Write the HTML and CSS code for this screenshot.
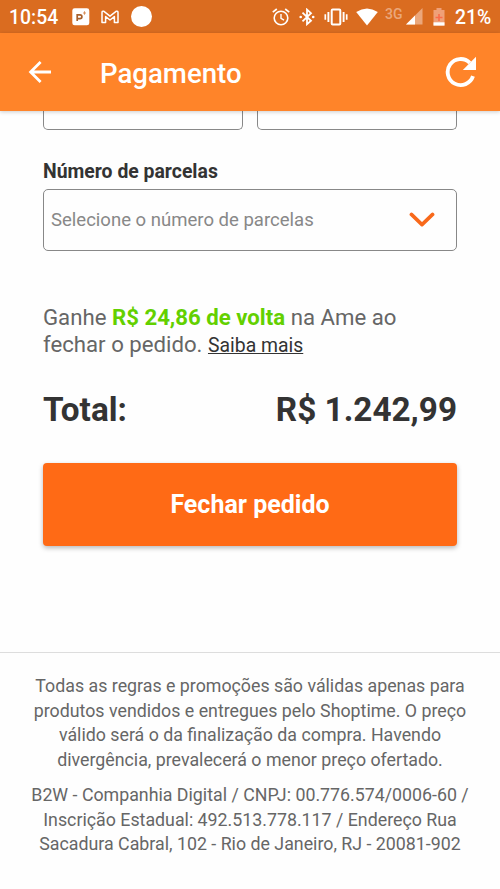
FILE: index.html
```
<!DOCTYPE html>
<html lang="pt-BR">
<head>
<meta charset="utf-8">
<title>Pagamento</title>
<link rel="stylesheet" href="styles.css">
</head>
<body>
<div class="status">
  <span class="clock">10:54</span>
  <svg class="i-app" width="18" height="18" viewBox="0 0 18 18"><rect x=".3" y=".3" width="17" height="17" rx="2.4" fill="#fff"/><path d="M5.2 13V6.8H8a1.9 1.9 0 0 1 0 3.8H5.4" fill="none" stroke="#a8602c" stroke-width="1.7"/><path d="M12.5 3.3v3.4M11 5h3" stroke="#d9905c" stroke-width="1"/></svg>
  <svg class="i-mail" width="18" height="14" viewBox="0 0 18 14"><path d="M1 12.6V2.6Q1 .8 2.6 1.2L9 6.2 15.4 1.2Q17 .8 17 2.6V12.6H13.4V6.6L9 10 4.6 6.6V12.6Z" fill="none" stroke="#fff" stroke-width="1.5" stroke-linejoin="round"/></svg>
  <span class="dot"></span>
  <div class="tray">
    <svg class="i-alarm" width="18" height="18" viewBox="0 0 18 18" fill="none" stroke="#fff"><circle cx="9" cy="10" r="6.8" stroke-width="1.6"/><path d="M9 6v4.3l3 1.8" stroke-width="1.4"/><path d="M.8 4.2 4.8 1M17.2 4.2 13.2 1" stroke-width="1.7"/></svg>
    <svg class="i-bt" width="16" height="18" viewBox="0 0 16 18"><path d="M3.5 4.6 12 12.8 8 16.2V1.6L12 5.2 3.5 13.4" fill="none" stroke="#fff" stroke-width="1.8"/><circle cx="1.7" cy="9" r="1.3" fill="#fff"/><circle cx="14.2" cy="9" r="1.3" fill="#fff"/></svg>
    <svg class="i-vib" width="24" height="18" viewBox="0 0 24 18" fill="none" stroke="#fff"><rect x="7.7" y="1.6" width="8.6" height="14.8" rx="1" stroke-width="2"/><path d="M4.4 4v10M19.6 4v10" stroke-width="1.9"/><path d="M1.3 6.2v5.6M22.7 6.2v5.6" stroke-width="1.7"/></svg>
    <svg class="i-wifi" width="22" height="18" viewBox="0 0 22 18"><path d="M.2 4Q11-3.2 21.8 4L11 17.5Z" fill="#fff"/></svg>
    <span class="net">3G</span>
    <svg class="i-sig" width="17" height="17" viewBox="0 0 17 17"><path d="M0 16.5 16.5 0V16.5Z" fill="#eba77b"/><path d="M0 16.5 9 7.5V16.5Z" fill="#fff"/></svg>
    <svg class="i-bat" width="12" height="18" viewBox="0 0 12 18"><path d="M3.5 0H8.5V2H11.5V17.6H.5V2H3.5Z" fill="#efa078"/><path d="M6 6v7M2.5 9.5h7" stroke="#fa6b4a" stroke-width="1.6"/><path d="M.5 14.3h11v3.3H.5z" fill="#fff"/></svg>
    <span class="pct">21%</span>
  </div>
</div>
<header class="bar">
  <svg class="back" width="24" height="24" viewBox="0 0 24 24"><path d="M23 12H2.6M12.6 2 2.6 12 12.6 22" fill="none" stroke="#fff" stroke-width="2.8"/></svg>
  <h1>Pagamento</h1>
  <svg class="reload" width="32" height="32" viewBox="0 0 32 32"><path d="M28 20.2A13 13 0 1 1 24.8 6.8" fill="none" stroke="#fff" stroke-width="3.9"/><path d="M31 .8V14H17.8Z" fill="#fff"/></svg>
</header>
<main>
  <div class="fields"><div class="field"></div><div class="field"></div></div>
  <div class="label">Número de parcelas</div>
  <div class="select"><span>Selecione o número de parcelas</span>
    <svg width="26" height="16" viewBox="0 0 26 16"><path d="M2.4 2.4 13 12.6 23.6 2.4" fill="none" stroke="#f8691b" stroke-width="3.6" stroke-linecap="round" stroke-linejoin="round"/></svg>
  </div>
  <p class="cash">Ganhe <b>R$ 24,86 de volta</b> na Ame ao<br>fechar o pedido. <a>Saiba mais</a></p>
  <div class="total"><span>Total:</span><span>R$ 1.242,99</span></div>
  <div class="submit">Fechar pedido</div>
</main>
<footer>
  <p>Todas as regras e promoções são válidas apenas para<br>produtos vendidos e entregues pelo Shoptime. O preço<br>válido será o da finalização da compra. Havendo<br>divergência, prevalecerá o menor preço ofertado.</p>
  <p>B2W - Companhia Digital / CNPJ: 00.776.574/0006-60 /<br>Inscrição Estadual: 492.513.778.117 / Endereço Rua<br>Sacadura Cabral, 102 - Rio de Janeiro, RJ - 20081-902</p>
</footer>
</body>
</html>
```
FILE: styles.css
```
* { box-sizing: border-box; }
body { margin: 0; width: 500px; height: 889px; overflow: hidden; background: #fefefe; font-family: Roboto, sans-serif; white-space: nowrap; }
svg { display: block; flex: none; }
h1, p { margin: 0; }
.status { height: 33px; background: #da6c20; display: flex; align-items: center; padding: 0 8px 0 9px; color: #fff; font-size: 19.4px; font-weight: 500; }
.clock { width: 63px; padding-top: 1px; }
.i-mail { margin-left: 11px; }
.dot { width: 21px; height: 21px; margin-left: 12px; border-radius: 50%; background: #fff; }
.tray { margin-left: auto; display: flex; align-items: center; }
.i-bt { margin-left: 9px; }
.i-vib { margin-left: 9px; }
.i-wifi { margin-left: 8px; }
.net { width: 19px; margin: 0 2px 5px 7px; font-size: 14px; line-height: 16px; color: #eba77b; }
.i-bat { margin-left: 10px; }
.pct { width: 37px; margin-left: 10px; padding-top: 1px; }
.bar { position: relative; height: 78px; background: #ff8429; display: flex; align-items: center; padding: 0 23px 0 28px; color: #fff; box-shadow: 0 1px 4px rgba(0,0,0,.2); }
.bar h1 { margin-left: 48px; padding-top: 3px; font-size: 27.6px; font-weight: 500; line-height: 34px; }
.reload { margin-left: auto; }
main { padding: 0 43px; }
.fields { display: grid; grid-template-columns: 200px 200px; gap: 14px; }
.field { height: 19px; border: 1px solid #888; border-top: 0; border-radius: 0 0 5px 5px; }
.label { margin-top: 29px; font-size: 19.4px; line-height: 26px; font-weight: 700; color: #333; }
.select { margin-top: 4px; height: 62px; padding: 0 21px 0 7px; border: 1px solid #888; border-radius: 5px; display: flex; align-items: center; justify-content: space-between; font-size: 18.55px; color: #888; }
.cash { margin-top: 53px; font-size: 22.2px; line-height: 26.6px; color: #666; }
.cash b { color: #63d000; }
.cash a { font-size: 19.4px; color: #333; text-decoration: underline; }
.total { margin-top: 29px; display: flex; justify-content: space-between; font-size: 33.3px; line-height: 44px; font-weight: 700; color: #333; }
.submit { margin-top: 31px; height: 83px; border-radius: 4px; background: #ff6a15; box-shadow: 0 2px 5px rgba(0,0,0,.28); display: flex; align-items: center; justify-content: center; color: #fff; font-size: 25px; font-weight: 700; }
footer { margin-top: 106px; border-top: 1px solid #ddd; padding-top: 21px; text-align: center; font-size: 17.8px; line-height: 24.5px; color: #666; }
footer p + p { margin-top: 11px; }
```
